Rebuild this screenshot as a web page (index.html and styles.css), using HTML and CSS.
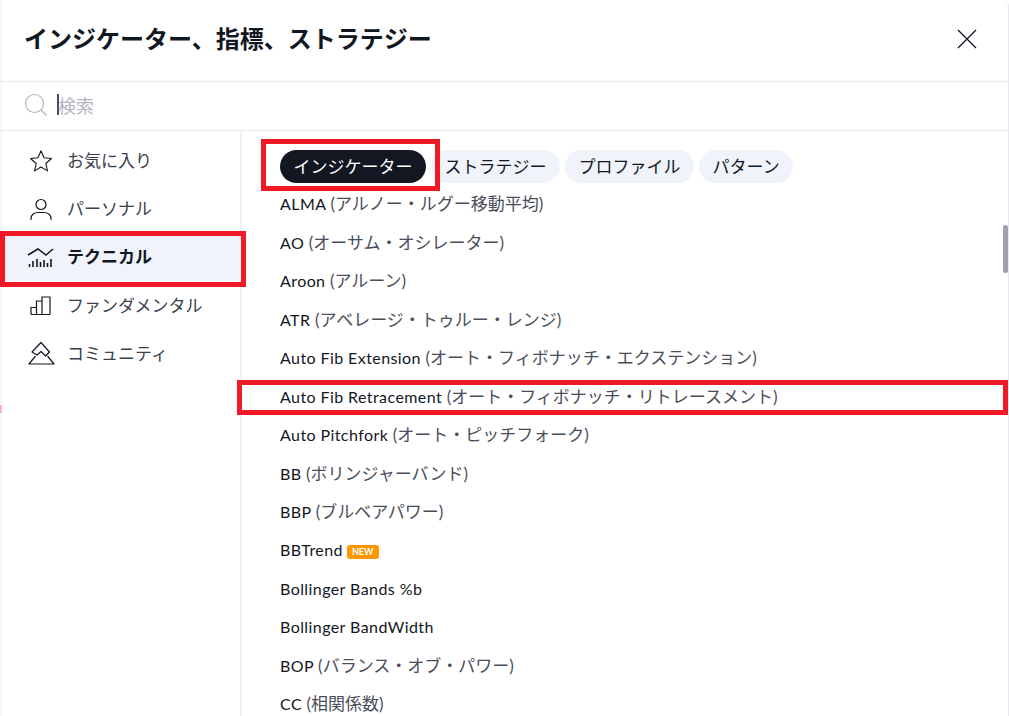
FILE: index.html
```html
<!DOCTYPE html>
<html lang="ja">
<head>
<meta charset="utf-8">
<title>インジケーター、指標、ストラテジー</title>
<link rel="stylesheet" href="styles.css">
</head>
<body>
<div class="dialog">
  <header class="header">
    <h1 class="title">インジケーター、指標、ストラテジー</h1>
    <svg class="close" viewBox="0 0 20 20" width="20" height="20"><path d="M1 1l18 18M19 1L1 19" fill="none" stroke="#131722" stroke-width="1.3"/></svg>
  </header>
  <div class="search">
    <svg class="search-icon" viewBox="0 0 24 24" width="24" height="24"><circle cx="10.5" cy="10.5" r="9" fill="none" stroke="#b2b5be" stroke-width="1.2"/><path d="M17 17l5.5 5.5" stroke="#b2b5be" stroke-width="1.2"/></svg>
    <span class="caret"></span>
    <span class="placeholder">検索</span>
  </div>
  <div class="main">
    <nav class="sidebar">
      <div class="nav-item">
        <svg class="nav-icon" viewBox="0 0 24 24" width="24" height="24"><path d="M12 1.8l3 7 7.5.7-5.7 5 1.7 7.4L12 18l-6.500 3.900 1.700-7.400-5.700-5 7.500-.7z" fill="none" stroke="#131722" stroke-width="1.1" stroke-linejoin="round"/></svg>
        <span class="nav-label">お気に入り</span>
      </div>
      <div class="nav-item">
        <svg class="nav-icon" viewBox="0 0 24 24" width="24" height="24"><circle cx="12" cy="7.500" r="5" fill="none" stroke="#131722" stroke-width="1.200"/><path d="M2 23v-1.500C2 17.500 5.500 15.500 9 15.500h6c3.500 0 7 2 7 6V23" fill="none" stroke="#131722" stroke-width="1.200"/></svg>
        <span class="nav-label">パーソナル</span>
      </div>
      <div class="nav-item active">
        <svg class="nav-icon" viewBox="0 0 24 24" width="24" height="24"><path d="M-1 10L9 4l8 6 7-6" fill="none" stroke="#131722" stroke-width="1.500"/><path d="M0.500 22v-3M4 22v-6M8 22v-8M11.500 22v-5M15 22v-7M18.500 22v-4M22 22v-8" fill="none" stroke="#131722" stroke-width="1.600"/></svg>
        <span class="nav-label">テクニカル</span>
      </div>
      <div class="nav-item">
        <svg class="nav-icon" viewBox="0 0 24 24" width="24" height="24"><path d="M2 21.500v-7h5.500v7M7.500 21.500V8h5.500v13.500M13 21.500V4h8v17.500M2 21.500h19" fill="none" stroke="#131722" stroke-width="1.200"/></svg>
        <span class="nav-label">ファンダメンタル</span>
      </div>
      <div class="nav-item">
        <svg class="nav-icon" viewBox="0 0 24 24" width="24" height="24"><path d="M12 1.500L20.500 11l-4 4L12 10.500 8 14 3 11z" fill="none" stroke="#131722" stroke-width="1.200" stroke-linejoin="round"/><path d="M6.500 15L0 23h25l-6.500-8" fill="none" stroke="#131722" stroke-width="1.200" stroke-linejoin="round"/></svg>
        <span class="nav-label">コミュニティ</span>
      </div>
    </nav>
    <section class="content">
      <div class="tabs">
        <span class="tab selected">インジケーター</span>
        <span class="tab">ストラテジー</span>
        <span class="tab">プロファイル</span>
        <span class="tab">パターン</span>
      </div>
      <ul class="list">
        <li>ALMA <span class="jp">(アルノー・ルグー移動平均)</span></li>
        <li>AO <span class="jp">(オーサム・オシレーター)</span></li>
        <li>Aroon <span class="jp">(アルーン)</span></li>
        <li>ATR <span class="jp">(アベレージ・トゥルー・レンジ)</span></li>
        <li>Auto Fib Extension <span class="jp">(オート・フィボナッチ・エクステンション)</span></li>
        <li>Auto Fib Retracement <span class="jp">(オート・フィボナッチ・リトレースメント)</span></li>
        <li>Auto Pitchfork <span class="jp">(オート・ピッチフォーク)</span></li>
        <li>BB <span class="jp">(ボリンジャーバンド)</span></li>
        <li>BBP <span class="jp">(ブルベアパワー)</span></li>
        <li>BBTrend<span class="badge">NEW</span></li>
        <li>Bollinger Bands %b</li>
        <li>Bollinger BandWidth</li>
        <li>BOP <span class="jp">(バランス・オブ・パワー)</span></li>
        <li>CC <span class="jp">(相関係数)</span></li>
      </ul>
      <div class="scrollbar"></div>
    </section>
  </div>
  <div class="mark mark-nav"></div>
  <div class="mark mark-tab"></div>
  <div class="mark mark-row"></div>
  <div class="edge-tick"></div>
</div>
</body>
</html>
```
FILE: styles.css
```css
* { box-sizing: border-box; }
html, body { margin: 0; padding: 0; background: #fff; }
body { width: 1009px; height: 716px; overflow: hidden; }
.dialog {
  position: relative;
  width: 1009px;
  height: 716px;
  display: flex;
  flex-direction: column;
  overflow: hidden;
  background: #fff;
  color: #131722;
  box-shadow: inset 2px 0 #f6f6fa;
  border-right: 1px solid #e8e8ee;
  border-top-right-radius: 6px;
  font-family: "Lato", "Noto Sans CJK JP", sans-serif;
}
.header {
  flex: none;
  height: 82px;
  display: flex;
  align-items: center;
  justify-content: space-between;
  padding: 0 31px 3px 24px;
  border-bottom: 1px solid #e9e9f1;
}
.title { margin: 0; font-size: 24px; font-weight: 700; line-height: 32px; }
.close { display: block; }
.search {
  flex: none;
  height: 49px;
  display: flex;
  align-items: center;
  padding: 0 0 3px 24px;
  border-bottom: 1px solid #e9e9f1;
}
.search-icon { flex: none; }
.caret { flex: none; width: 2px; height: 21px; margin-left: 9px; background: #4a4e5a; }
.placeholder { font-size: 18px; color: #b2b5be; margin-left: -1px; }
.main { flex: 1; display: flex; min-height: 0; }
.sidebar {
  flex: none;
  width: 242px;
  padding-top: 5.5px;
  border-right: 2px solid #f0f0f6;
}
.nav-item {
  height: 48.2px;
  display: flex;
  align-items: center;
  gap: 15px;
  padding-left: 29px;
  font-size: 17px;
  color: #3c404c;
}
.nav-label { position: relative; top: -1px; margin-left: -1px; }
.nav-icon { flex: none; display: block; overflow: visible; }
.nav-item.active { background: #f0f3fa; color: #131722; font-weight: 700; }
.content { position: relative; flex: 1; min-width: 0; padding: 19px 0 0 38px; }
.tabs { display: flex; gap: 5px; }
.tab {
  height: 33px;
  display: flex;
  align-items: center;
  padding: 0 13.5px 2px;
  border-radius: 17px;
  background: #f0f3fa;
  font-size: 17px;
}
.tab.selected { background: #131722; color: #fff; }
.list { margin: 2.4px 0 0; padding: 0; list-style: none; }
.list li {
  height: 38.46px;
  line-height: 38.46px;
  font-size: 16px;
  letter-spacing: 0.42px;
  white-space: nowrap;
}
.jp { color: #4a4e5a; font-size: 17px; letter-spacing: 0; }
.badge {
  display: inline-block;
  height: 14px;
  margin-left: 4px;
  padding: 0 5px;
  vertical-align: 1px;
  line-height: 14px;
  letter-spacing: 0;
  border-radius: 3px;
  background: #ff9800;
  color: #fff;
  font-size: 9px;
  font-weight: 700;
}
.scrollbar {
  position: absolute;
  top: 94px;
  right: 0;
  width: 5px;
  height: 48px;
  border-radius: 3px;
  background: #9ea1aa;
}
.mark { position: absolute; border: 5px solid #f01a26; }
.mark-nav { left: 0; top: 231px; width: 246px; height: 56px; }
.mark-tab { left: 261px; top: 139px; width: 179px; height: 52px; }
.mark-row { left: 237px; top: 380px; width: 771px; height: 35px; }
.edge-tick { position: absolute; left: 0; top: 405px; width: 2px; height: 8px; background: #f9b4b8; }
```
